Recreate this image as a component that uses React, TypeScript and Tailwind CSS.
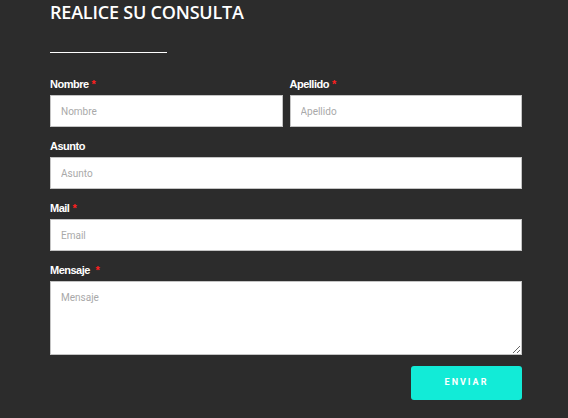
import React from "react";

const labelCls =
  "block text-[11px] font-bold text-white tracking-[-0.5px] leading-[14px] mb-[4px] font-['Liberation_Sans',Arial,sans-serif]";
const inputCls =
  "block w-full h-[32px] bg-white border border-[#c4c4c4] px-[10px] text-[10px] text-[#555] placeholder:text-[#a9a9a9] outline-none";

function Star() {
  return <span className="text-[#ff1f1f] ml-[3px]">*</span>;
}

export default function App() {
  return (
    <div
      className="w-[568px] h-[418px] bg-[#2c2c2c] overflow-hidden"
      style={{ fontFamily: "Roboto, 'Liberation Sans', Arial, sans-serif" }}
    >
      <div className="pl-[50px] w-[522px]">
        <h2
          className="text-[18px] font-semibold leading-[24px] text-white tracking-[-0.2px]"
          style={{ fontFamily: "'Open Sans', sans-serif" }}
        >
          REALICE SU CONSULTA
        </h2>
        <div className="mt-[28px] w-[117px] h-px bg-white" />

        <form className="mt-[24px]" onSubmit={(e) => e.preventDefault()}>
          <div className="flex gap-[7px]">
            <div className="flex-1">
              <label className={labelCls}>
                Nombre
                <Star />
              </label>
              <input className={inputCls} placeholder="Nombre" />
            </div>
            <div className="flex-1">
              <label className={labelCls}>
                Apellido
                <Star />
              </label>
              <input className={inputCls} placeholder="Apellido" />
            </div>
          </div>

          <div className="mt-[12px]">
            <label className={labelCls}>Asunto</label>
            <input className={inputCls} placeholder="Asunto" />
          </div>

          <div className="mt-[12px]">
            <label className={labelCls}>
              Mail
              <Star />
            </label>
            <input className={inputCls} placeholder="Email" />
          </div>

          <div className="mt-[12px]">
            <label className={labelCls}>
              Mensaje <Star />
            </label>
            <textarea
              className="block w-full h-[74px] bg-white border border-[#c4c4c4] px-[10px] py-[8px] text-[10px] text-[#555] placeholder:text-[#a9a9a9] outline-none"
              placeholder="Mensaje"
            />
          </div>

          <div className="flex justify-end mt-[11px]">
            <button
              type="submit"
              className="w-[111px] h-[34px] rounded-[3px] bg-[#12ebd7] text-white text-[9px] font-bold tracking-[2px]"
            >
              ENVIAR
            </button>
          </div>
        </form>
      </div>
    </div>
  );
}
